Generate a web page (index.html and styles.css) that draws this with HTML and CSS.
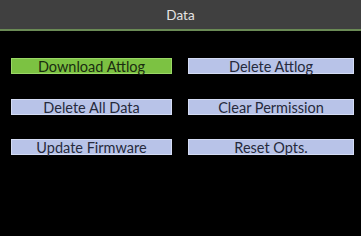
FILE: index.html
```html
<!DOCTYPE html>
<html>
<head>
<meta charset="utf-8">
<link rel="stylesheet" href="styles.css">
</head>
<body>
<div class="header">Data</div>
<div class="grid">
  <div class="btn active">Download Attlog</div>
  <div class="btn">Delete Attlog</div>
  <div class="btn">Delete All Data</div>
  <div class="btn">Clear Permission</div>
  <div class="btn">Update Firmware</div>
  <div class="btn">Reset Opts.</div>
</div>
</body>
</html>
```
FILE: styles.css
```css
html, body {
  margin: 0;
  padding: 0;
  background: #000;
  width: 361px;
  height: 236px;
  overflow: hidden;
  font-family: Lato, "Open Sans", sans-serif;
}
.header {
  height: 29px;
  background: #404040;
  border-bottom: 2px solid #6a8a55;
  color: #e4e4e4;
  font-size: 13.5px;
  line-height: 30px;
  text-align: center;
}
.grid {
  display: grid;
  grid-template-columns: 161px 166px;
  grid-auto-rows: 16px;
  column-gap: 16px;
  row-gap: 24.5px;
  padding: 27px 0 0 11px;
}
.btn {
  box-sizing: border-box;
  background: #b8c3e8;
  border: 1px solid #d4dcf4;
  color: #262a3c;
  font-size: 14.5px;
  line-height: 15px;
  text-align: center;
}
.btn.active {
  background: #7cc242;
  border-color: #9ad866;
  color: #1a2c10;
}
```
